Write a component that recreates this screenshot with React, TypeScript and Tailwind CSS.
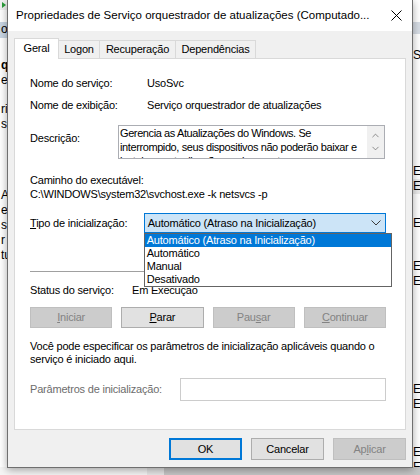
import { ChevronDown, ChevronUp } from "lucide-react";

function Btn({
  label,
  disabled,
  primary,
}: {
  label: React.ReactNode;
  disabled?: boolean;
  primary?: boolean;
}) {
  if (disabled) {
    return (
      <div className="flex h-full items-center justify-center border border-[#bfbfbf] bg-[#cccccc] text-[#838383]">
        {label}
      </div>
    );
  }
  if (primary) {
    return (
      <div className="flex h-full items-center justify-center border-2 border-[#0078d7] bg-[#e1e1e1]">
        {label}
      </div>
    );
  }
  return (
    <div className="flex h-full items-center justify-center border border-[#adadad] bg-[#e1e1e1]">
      {label}
    </div>
  );
}

function Backdrop() {
  return (
    <>
      {/* left edge of the services console behind */}
      <div className="absolute left-0 top-0 flex h-full w-[7px] flex-col overflow-hidden bg-white leading-[15px] text-[12px]">
        <div className="flex h-[10px] items-center bg-[#f0f0f0] pl-[2px]">
          <div className="h-0 w-0 border-y-[3px] border-l-[4px] border-y-transparent border-l-[#2a9d3a]" />
        </div>
        <div className="mt-[12px] h-[16px] bg-[#c9d6e4] pl-[1px]">o</div>
        <div className="mt-[20px] pl-[1px] font-bold">qu</div>
        <div className="pl-[1px]">es</div>
        <div className="mt-[14px] pl-[1px]">ri</div>
        <div className="pl-[1px]">se</div>
        <div className="mt-[56px] pl-[1px]">A</div>
        <div className="pl-[1px]">e</div>
        <div className="pl-[1px]">s r</div>
        <div className="pl-[1px]">tu</div>
      </div>
      {/* right edge */}
      <div className="absolute right-0 top-0 flex h-full w-[8px] flex-col overflow-hidden bg-white pl-[1px] leading-[15px] text-[12px]">
        <div className="mt-[22px] h-[14px] bg-[#d7dde5]" />
        <div className="mt-[14px]">St</div>
        <div className="mt-[101px]">En</div>
        <div className="bg-[#ececec]">En</div>
        <div className="mt-[22px]">En</div>
        <div className="mt-[28px]">En</div>
        <div>En</div>
        <div className="mt-[93px]">En</div>
        <div>En</div>
        <div className="mt-[33px]">En</div>
        <div>En</div>
      </div>
      {/* bottom edge */}
      <div className="absolute bottom-0 left-0 flex h-[8px] w-full">
        <div className="w-[147px] bg-[#f5f5f5]" />
        <div className="w-[17px] bg-[#e6e6e6]" />
        <div className="flex-1 bg-[#c6c6c6]" />
      </div>
    </>
  );
}

export default function App() {
  return (
    <div className="relative h-[475px] w-[420px] overflow-hidden bg-white font-['Liberation_Sans',Arial,sans-serif] text-[11px] text-black">
      <Backdrop />

      {/* dialog window */}
      <div className="absolute left-[7px] top-0 flex h-[468px] w-[406px] flex-col border-x border-b border-[#6f6f6f] bg-[#f0f0f0] tracking-[-0.2px] shadow-[0_2px_8px_rgba(0,0,0,0.35)]">
        {/* title bar */}
        <div className="flex h-[31px] items-center justify-between bg-white pl-[8px] pr-[10px]">
          <span className="text-[11.5px] tracking-normal">Propriedades de Serviço orquestrador de atualizações (Computado...</span>
          <svg width="11" height="11" viewBox="0 0 11 11" className="text-black">
            <path d="M0.5 0.5 L10.5 10.5 M10.5 0.5 L0.5 10.5" stroke="currentColor" strokeWidth="1" />
          </svg>
        </div>

        <div className="flex flex-1 flex-col px-[6px] pt-[7px]">
          {/* tabs */}
          <div className="flex h-[20px] items-end">
            <div className="relative z-10 -mb-px flex h-[21px] w-[45px] items-center justify-center border-x border-t border-[#d9d9d9] bg-white pb-[2px]">
              Geral
            </div>
            <div className="flex h-[18px] w-[41px] items-center justify-center border-r border-t border-[#d9d9d9] bg-[#f0f0f0]">
              Logon
            </div>
            <div className="flex h-[18px] w-[76px] items-center justify-center border-r border-t border-[#d9d9d9] bg-[#f0f0f0]">
              Recuperação
            </div>
            <div className="flex h-[18px] w-[80px] items-center justify-center border-r border-t border-[#d9d9d9] bg-[#f0f0f0]">
              Dependências
            </div>
          </div>

          {/* tab panel */}
          <div className="flex h-[372px] flex-col border border-[#d9d9d9] bg-white pl-[15px] pr-[19px]">
            <div className="mt-[13px] flex h-[22px] items-center">
              <span className="w-[117px]">Nome do serviço:</span>
              <span>UsoSvc</span>
            </div>
            <div className="flex h-[22px] items-center">
              <span className="w-[117px]">Nome de exibição:</span>
              <span>Serviço orquestrador de atualizações</span>
            </div>

            <div className="mt-[9px] flex h-[34px]">
              <span className="w-[88px] pt-[6px] leading-[14px]">Descrição:</span>
              <div className="flex w-[267px] border border-[#abadb3]">
                <div className="flex-1 overflow-hidden pl-[1px] leading-[14px] tracking-[-0.4px]">
                  Gerencia as Atualizações do Windows. Se interrompido, seus dispositivos não poderão baixar e
                  instalar as atualizações mais recentes.
                </div>
                <div className="flex w-[17px] flex-col items-center justify-center gap-[2px] bg-[#f0f0f0] text-[#606060]">
                  <ChevronUp size={11} strokeWidth={1.5} />
                  <ChevronDown size={11} strokeWidth={1.5} />
                </div>
              </div>
            </div>

            <div className="mt-[14px] leading-[14px]">
              <div>Caminho do executável:</div>
              <div>C:\WINDOWS\system32\svchost.exe -k netsvcs -p</div>
            </div>

            <div className="mt-[12px] flex h-[20px] items-center">
              <span className="w-[116px]">
                <span className="underline underline-offset-1">T</span>ipo de inicialização:
              </span>
              <div className="relative flex h-[20px] w-[247px] items-center justify-between border border-[#0078d7] bg-[#cce4f7] pl-[3px] pr-[4px]">
                <span>Automático (Atraso na Inicialização)</span>
                <svg width="10" height="6" viewBox="0 0 10 6">
                  <path d="M0.5 0.5 L5 5 L9.5 0.5" fill="none" stroke="#3c3c3c" strokeWidth="1" />
                </svg>
                {/* open dropdown list */}
                <div className="absolute -left-px top-[19px] z-20 flex w-[248px] flex-col border border-[#646464] bg-white leading-[13px]">
                  <div className="h-[13px] bg-[#0078d7] pl-[2px] text-white">Automático (Atraso na Inicialização)</div>
                  <div className="h-[13px] pl-[2px]">Automático</div>
                  <div className="h-[13px] pl-[2px]">Manual</div>
                  <div className="h-[13px] pl-[2px]">Desativado</div>
                </div>
              </div>
            </div>

            <div className="mt-[38px] h-px bg-[#a0a0a0]" />

            <div className="mt-[11px] flex h-[14px] items-center">
              <span className="w-[102px]">Status do serviço:</span>
              <span>Em Execução</span>
            </div>

            <div className="mt-[10px] grid h-[21px] grid-cols-4 gap-[9px]">
              <Btn disabled label={<><span className="underline underline-offset-1">I</span>niciar</>} />
              <Btn label={<><span className="underline underline-offset-1">P</span>arar</>} />
              <Btn disabled label={<>Pau<span className="underline underline-offset-1">s</span>ar</>} />
              <Btn disabled label={<><span className="underline underline-offset-1">C</span>ontinuar</>} />
            </div>

            <p className="mt-[12px] leading-[13px]">
              Você pode especificar os parâmetros de inicialização aplicáveis quando o serviço é iniciado aqui.
            </p>

            <div className="mt-[12px] flex h-[23px] items-center">
              <span className="w-[150px] text-[#6d6d6d]">Parâmetros de inicialização:</span>
              <div className="h-full flex-1 border border-[#cccccc] bg-white" />
            </div>
          </div>

          {/* dialog buttons */}
          <div className="mt-[8px] flex h-[22px] justify-end gap-[9px]">
            <div className="w-[73px]">
              <Btn primary label="OK" />
            </div>
            <div className="w-[73px]">
              <Btn label="Cancelar" />
            </div>
            <div className="w-[73px]">
              <Btn disabled label={<>Ap<span className="underline underline-offset-1">l</span>icar</>} />
            </div>
          </div>
        </div>
      </div>
    </div>
  );
}
